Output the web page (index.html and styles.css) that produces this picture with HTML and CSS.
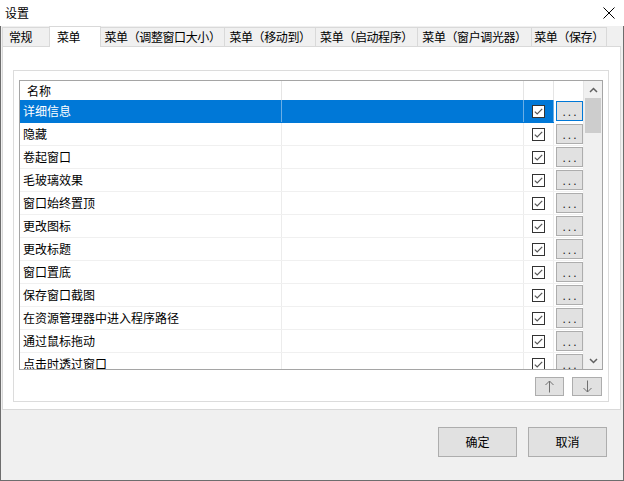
FILE: index.html
```html
<!DOCTYPE html>
<html>
<head>
<meta charset="utf-8">
<title>设置</title>
<link rel="stylesheet" href="styles.css">
</head>
<body>
<div class="window">
  <div class="titlebar">
    <span class="title">设置</span>
    <svg class="close" width="12" height="12" viewBox="0 0 12 12"><path d="M0.5 0.5 L11.5 11.5 M11.5 0.5 L0.5 11.5" stroke="#000" stroke-width="1" fill="none"/></svg>
  </div>
  <div class="frame">
    <div class="tabs">
      <div class="tab tab-general">常规</div>
      <div class="tab tab-menu active">菜单</div>
      <div class="tab tab-resize">菜单（调整窗口大小）</div>
      <div class="tab tab-move">菜单（移动到）</div>
      <div class="tab tab-launch">菜单（启动程序）</div>
      <div class="tab tab-dim">菜单（窗户调光器）</div>
      <div class="tab tab-save">菜单（保存）</div>
    </div>
    <div class="panel">
      <div class="group">
        <div class="list">
          <div class="table">
            <div class="row header">
              <div class="cell name">名称</div>
              <div class="cell"></div>
              <div class="cell"></div>
              <div class="cell"></div>
            </div>
            <div class="rows">
              <div class="row selected"><div class="cell name">详细信息</div><div class="cell"></div><div class="cell chk"><svg class="cb" width="13" height="13" viewBox="0 0 13 13"><rect x="0.5" y="0.5" width="12" height="12" fill="#fff" stroke="#333"/><path d="M2.8 6.6 L5.2 9 L10.2 3.8" stroke="#555" stroke-width="1.2" fill="none"/></svg></div><div class="cell btn"><span class="more focus">...</span></div></div>
              <div class="row"><div class="cell name">隐藏</div><div class="cell"></div><div class="cell chk"><svg class="cb" width="13" height="13" viewBox="0 0 13 13"><rect x="0.5" y="0.5" width="12" height="12" fill="#fff" stroke="#333"/><path d="M2.8 6.6 L5.2 9 L10.2 3.8" stroke="#555" stroke-width="1.2" fill="none"/></svg></div><div class="cell btn"><span class="more">...</span></div></div>
              <div class="row"><div class="cell name">卷起窗口</div><div class="cell"></div><div class="cell chk"><svg class="cb" width="13" height="13" viewBox="0 0 13 13"><rect x="0.5" y="0.5" width="12" height="12" fill="#fff" stroke="#333"/><path d="M2.8 6.6 L5.2 9 L10.2 3.8" stroke="#555" stroke-width="1.2" fill="none"/></svg></div><div class="cell btn"><span class="more">...</span></div></div>
              <div class="row"><div class="cell name">毛玻璃效果</div><div class="cell"></div><div class="cell chk"><svg class="cb" width="13" height="13" viewBox="0 0 13 13"><rect x="0.5" y="0.5" width="12" height="12" fill="#fff" stroke="#333"/><path d="M2.8 6.6 L5.2 9 L10.2 3.8" stroke="#555" stroke-width="1.2" fill="none"/></svg></div><div class="cell btn"><span class="more">...</span></div></div>
              <div class="row"><div class="cell name">窗口始终置顶</div><div class="cell"></div><div class="cell chk"><svg class="cb" width="13" height="13" viewBox="0 0 13 13"><rect x="0.5" y="0.5" width="12" height="12" fill="#fff" stroke="#333"/><path d="M2.8 6.6 L5.2 9 L10.2 3.8" stroke="#555" stroke-width="1.2" fill="none"/></svg></div><div class="cell btn"><span class="more">...</span></div></div>
              <div class="row"><div class="cell name">更改图标</div><div class="cell"></div><div class="cell chk"><svg class="cb" width="13" height="13" viewBox="0 0 13 13"><rect x="0.5" y="0.5" width="12" height="12" fill="#fff" stroke="#333"/><path d="M2.8 6.6 L5.2 9 L10.2 3.8" stroke="#555" stroke-width="1.2" fill="none"/></svg></div><div class="cell btn"><span class="more">...</span></div></div>
              <div class="row"><div class="cell name">更改标题</div><div class="cell"></div><div class="cell chk"><svg class="cb" width="13" height="13" viewBox="0 0 13 13"><rect x="0.5" y="0.5" width="12" height="12" fill="#fff" stroke="#333"/><path d="M2.8 6.6 L5.2 9 L10.2 3.8" stroke="#555" stroke-width="1.2" fill="none"/></svg></div><div class="cell btn"><span class="more">...</span></div></div>
              <div class="row"><div class="cell name">窗口置底</div><div class="cell"></div><div class="cell chk"><svg class="cb" width="13" height="13" viewBox="0 0 13 13"><rect x="0.5" y="0.5" width="12" height="12" fill="#fff" stroke="#333"/><path d="M2.8 6.6 L5.2 9 L10.2 3.8" stroke="#555" stroke-width="1.2" fill="none"/></svg></div><div class="cell btn"><span class="more">...</span></div></div>
              <div class="row"><div class="cell name">保存窗口截图</div><div class="cell"></div><div class="cell chk"><svg class="cb" width="13" height="13" viewBox="0 0 13 13"><rect x="0.5" y="0.5" width="12" height="12" fill="#fff" stroke="#333"/><path d="M2.8 6.6 L5.2 9 L10.2 3.8" stroke="#555" stroke-width="1.2" fill="none"/></svg></div><div class="cell btn"><span class="more">...</span></div></div>
              <div class="row"><div class="cell name">在资源管理器中进入程序路径</div><div class="cell"></div><div class="cell chk"><svg class="cb" width="13" height="13" viewBox="0 0 13 13"><rect x="0.5" y="0.5" width="12" height="12" fill="#fff" stroke="#333"/><path d="M2.8 6.6 L5.2 9 L10.2 3.8" stroke="#555" stroke-width="1.2" fill="none"/></svg></div><div class="cell btn"><span class="more">...</span></div></div>
              <div class="row"><div class="cell name">通过鼠标拖动</div><div class="cell"></div><div class="cell chk"><svg class="cb" width="13" height="13" viewBox="0 0 13 13"><rect x="0.5" y="0.5" width="12" height="12" fill="#fff" stroke="#333"/><path d="M2.8 6.6 L5.2 9 L10.2 3.8" stroke="#555" stroke-width="1.2" fill="none"/></svg></div><div class="cell btn"><span class="more">...</span></div></div>
              <div class="row"><div class="cell name">点击时透过窗口</div><div class="cell"></div><div class="cell chk"><svg class="cb" width="13" height="13" viewBox="0 0 13 13"><rect x="0.5" y="0.5" width="12" height="12" fill="#fff" stroke="#333"/><path d="M2.8 6.6 L5.2 9 L10.2 3.8" stroke="#555" stroke-width="1.2" fill="none"/></svg></div><div class="cell btn"><span class="more">...</span></div></div>
            </div>
          </div>
          <div class="scrollbar">
            <div class="sb-arrow"><svg width="9" height="6" viewBox="0 0 9 6"><path d="M1 5 L4.5 1.5 L8 5" stroke="#606060" stroke-width="1.5" fill="none"/></svg></div>
            <div class="sb-thumb"></div>
            <div class="sb-track"></div>
            <div class="sb-arrow"><svg width="9" height="6" viewBox="0 0 9 6"><path d="M1 1 L4.5 4.5 L8 1" stroke="#606060" stroke-width="1.5" fill="none"/></svg></div>
          </div>
        </div>
        <div class="movers">
          <button class="mover up"><svg width="11" height="13" viewBox="0 0 11 13"><path d="M5.5 1 L5.5 12.5 M1.5 5 L5.5 1 L9.5 5" stroke="#707070" stroke-width="1" fill="none"/></svg></button>
          <button class="mover down"><svg width="11" height="13" viewBox="0 0 11 13"><path d="M5.5 0.5 L5.5 12 M1.5 8 L5.5 12 L9.5 8" stroke="#707070" stroke-width="1" fill="none"/></svg></button>
        </div>
      </div>
    </div>
    <div class="footer">
      <button class="dlg-btn">确定</button>
      <button class="dlg-btn">取消</button>
    </div>
  </div>
</div>
</body>
</html>
```

FILE: styles.css
```css
* { box-sizing: border-box; }
html, body { margin: 0; padding: 0; }
body {
  width: 624px;
  height: 481px;
  overflow: hidden;
  background: #ffffff;
  font-family: "Noto Sans CJK SC", "Microsoft YaHei", sans-serif;
  font-size: 12px;
  color: #000;
}
.window { width: 624px; height: 481px; display: flex; flex-direction: column; }
.titlebar {
  height: 26px;
  background: #fff;
  display: flex;
  align-items: center;
  justify-content: space-between;
  padding-left: 5px;
  padding-right: 9px;
}
.title { font-size: 12px; line-height: 14px; }
.close { display: block; }

.frame {
  height: 455px;
  background: #f0f0f0;
  border: 1px solid #6d6d6d;
  border-top: none;
  display: flex;
  flex-direction: column;
}
.tabs {
  height: 20px;
  display: flex;
  align-items: flex-end;
  padding-left: 1px;
}
.tab {
  height: 19px;
  border: 1px solid #d9d9d9;
  border-bottom: none;
  background: #f0f0f0;
  margin-left: -1px;
  display: flex;
  align-items: center;
  justify-content: center;
  white-space: nowrap;
  letter-spacing: -0.4px;
  line-height: 14px;
}
.tab:first-child { margin-left: 0; }
.tab.active {
  height: 21px;
  background: #fff;
  position: relative;
  z-index: 2;
  margin-bottom: -1px;
  border-color: #d9d9d9;
}
.tab-general { width: 48px; justify-content: flex-start; padding-left: 6px; }
.tab-menu { width: 52px; justify-content: flex-start; padding-left: 7px; }
.tab-resize { width: 125px; }
.tab-move { width: 92px; }
.tab-launch { width: 103px; }
.tab-dim { width: 115px; }
.tab-save { width: 76px; }

.panel {
  margin-left: 1px;
  width: 619px;
  height: 364px;
  background: #fff;
  border: 1px solid #d9d9d9;
}
.group {
  margin: 23px 0 0 10px;
  width: 596px;
  height: 332px;
  border: 1px solid #dcdcdc;
}
.list {
  margin: 9px 0 0 5px;
  width: 584px;
  height: 290px;
  border: 1px solid #a5a5a5;
  display: flex;
  overflow: hidden;
}
.table { width: 564px; height: 288px; display: flex; flex-direction: column; }
.rows { flex: 1; overflow: hidden; }
.row {
  display: grid;
  grid-template-columns: 262px 242px 30px 30px;
  height: 23px;
  border-bottom: 1px solid #f0f0f0;
}
.row.header { height: 19px; border-bottom: none; }
.cell {
  border-right: 1px solid #ececec;
  display: flex;
  align-items: center;
  white-space: nowrap;
  overflow: hidden;
  line-height: 14px;
}
.header .cell { border-right-color: #e5e5e5; }
.cell.name { padding-left: 3px; }
.header .cell.name { padding-left: 7px; }
.cell.chk { justify-content: center; }
.cell.btn { padding-left: 2px; align-items: flex-start; padding-top: 1px; }
.cb { display: block; }

.row.selected { border-bottom-color: #0078d7; }
.row.selected .cell { background: #0078d7; color: #fff; border-right-color: #6aaee6; }
.row.selected .cell.btn { background: #fff; border-right-color: #ececec; }
.row.selected .cell.btn { margin-bottom: -1px; }

.more {
  width: 27px;
  height: 20px;
  background: #e1e1e1;
  border: 1px solid #adadad;
  font-family: "Liberation Sans", Arial, sans-serif;
  font-size: 12px;
  letter-spacing: 2px;
  padding-left: 2px;
  color: #222;
  display: flex;
  align-items: center;
  justify-content: center;
  line-height: 12px;
  padding-top: 2px;
}
.more.focus { border-color: #0078d7; }

.scrollbar {
  width: 18px;
  height: 288px;
  background: #f0f0f0;
  display: flex;
  flex-direction: column;
  align-items: center;
}
.sb-arrow { height: 17px; width: 18px; display: flex; align-items: center; justify-content: center; }
.sb-thumb { width: 16px; height: 35px; background: #cdcdcd; }
.sb-track { flex: 1; }

.movers {
  margin-top: 7px;
  height: 19px;
  display: flex;
  justify-content: flex-end;
  gap: 8px;
  padding-right: 6px;
}
.mover {
  height: 19px;
  padding: 0;
  margin: 0;
  background: #e1e1e1;
  border: 1px solid #adadad;
  display: flex;
  align-items: center;
  justify-content: center;
}
.mover.up { width: 29px; }
.mover.down { width: 30px; }

.footer {
  flex: 1;
  display: flex;
  justify-content: flex-end;
  align-items: flex-start;
  padding-top: 17px;
  padding-right: 16px;
  gap: 11px;
}
.dlg-btn {
  width: 79px;
  height: 30px;
  margin: 0;
  padding: 0;
  background: #e1e1e1;
  border: 1px solid #adadad;
  font-family: "Noto Sans CJK SC", "Microsoft YaHei", sans-serif;
  font-size: 12px;
  color: #000;
  line-height: 14px;
}
```
